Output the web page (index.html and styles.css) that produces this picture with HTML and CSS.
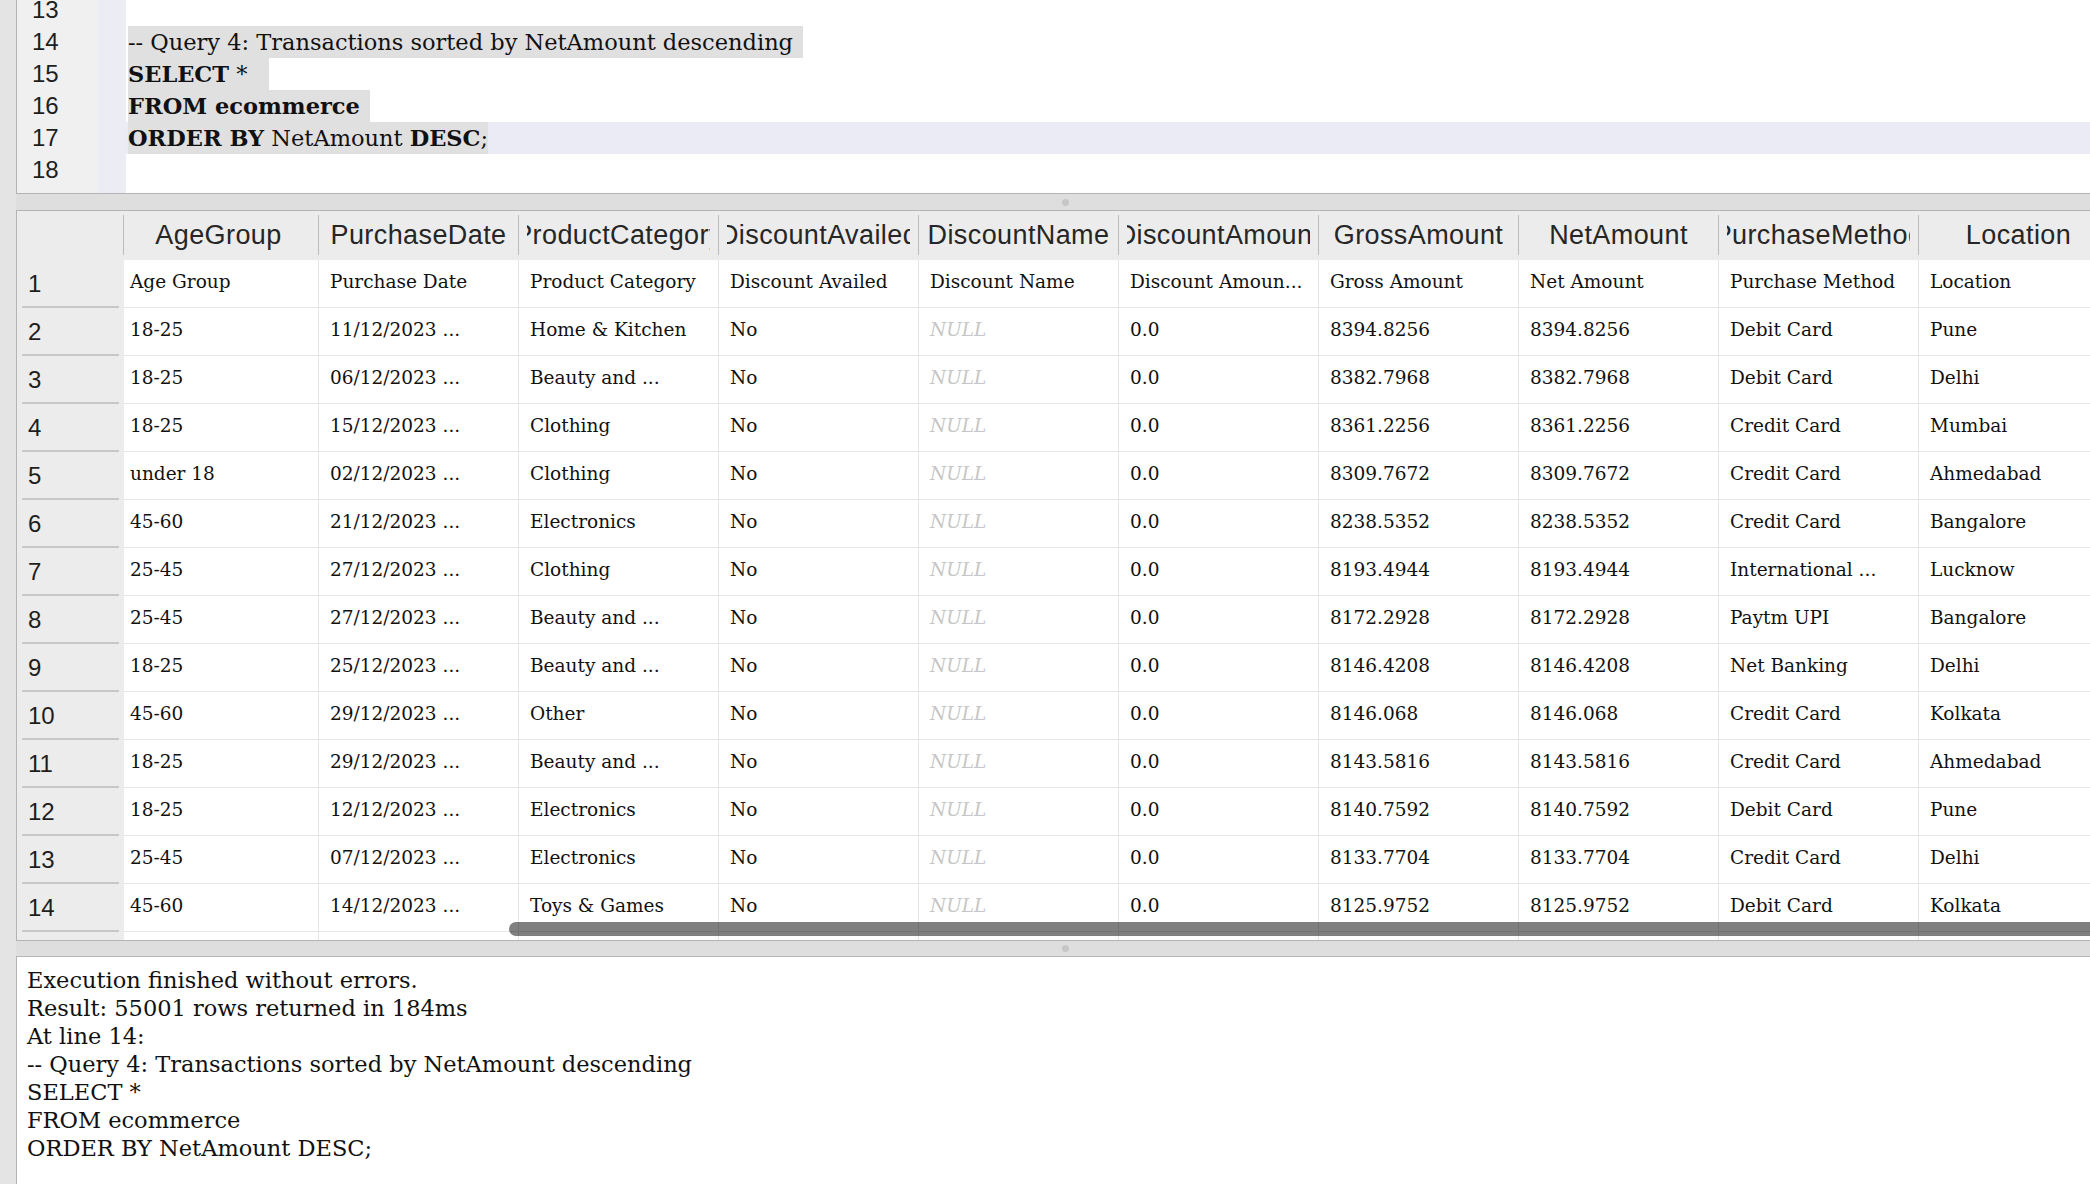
FILE: index.html
```html
<!DOCTYPE html>
<html lang="en">
<head>
<meta charset="utf-8">
<title>SQL Query Results</title>
<link rel="stylesheet" href="styles.css">
</head>
<body>
<div class="app">
  <div class="editor">
    <div class="editor-inner">
      <div class="gutter">
        <div class="ln">13</div>
        <div class="ln">14</div>
        <div class="ln">15</div>
        <div class="ln">16</div>
        <div class="ln">17</div>
        <div class="ln">18</div>
      </div>
      <div class="fold"></div>
      <div class="code">
        <div class="line"></div>
        <div class="line"><span class="sel nl">-- Query 4: Transactions sorted by NetAmount descending</span></div>
        <div class="line"><span class="sel sel-15"><b>SELECT</b> *</span></div>
        <div class="line"><span class="sel nl"><b>FROM ecommerce</b></span></div>
        <div class="line current"><span class="sel"><b>ORDER BY</b> NetAmount <b>DESC</b>;</span></div>
        <div class="line"></div>
      </div>
    </div>
  </div>

  <div class="splitter splitter-top"><span class="handle"></span></div>

  <div class="results">
    <div class="rownums">
      <div class="corner"><div class="corner-inner"></div></div>
      <div class="rn"><div class="rn-inner">1</div></div>
      <div class="rn"><div class="rn-inner">2</div></div>
      <div class="rn"><div class="rn-inner">3</div></div>
      <div class="rn"><div class="rn-inner">4</div></div>
      <div class="rn"><div class="rn-inner">5</div></div>
      <div class="rn"><div class="rn-inner">6</div></div>
      <div class="rn"><div class="rn-inner">7</div></div>
      <div class="rn"><div class="rn-inner">8</div></div>
      <div class="rn"><div class="rn-inner">9</div></div>
      <div class="rn"><div class="rn-inner">10</div></div>
      <div class="rn"><div class="rn-inner">11</div></div>
      <div class="rn"><div class="rn-inner">12</div></div>
      <div class="rn"><div class="rn-inner">13</div></div>
      <div class="rn"><div class="rn-inner">14</div></div>
      <div class="rn"><div class="rn-inner"></div></div>
    </div>
    <div class="viewport">
      <div class="grid">
        <div class="hrow">
          <div class="hc"><div class="hc-inner"><div class="hc-clip"><span>AgeGroup</span></div></div></div>
          <div class="hc"><div class="hc-inner"><div class="hc-clip"><span>PurchaseDate</span></div></div></div>
          <div class="hc"><div class="hc-inner"><div class="hc-clip"><span>ProductCategory</span></div></div></div>
          <div class="hc"><div class="hc-inner"><div class="hc-clip"><span>DiscountAvailed</span></div></div></div>
          <div class="hc"><div class="hc-inner"><div class="hc-clip"><span>DiscountName</span></div></div></div>
          <div class="hc"><div class="hc-inner"><div class="hc-clip"><span>DiscountAmount</span></div></div></div>
          <div class="hc"><div class="hc-inner"><div class="hc-clip"><span>GrossAmount</span></div></div></div>
          <div class="hc"><div class="hc-inner"><div class="hc-clip"><span>NetAmount</span></div></div></div>
          <div class="hc"><div class="hc-inner"><div class="hc-clip"><span>PurchaseMethod</span></div></div></div>
          <div class="hc"><div class="hc-inner"><div class="hc-clip"><span>Location</span></div></div></div>
        </div>
        <div class="row"><div class="c">Age Group</div><div class="c">Purchase Date</div><div class="c">Product Category</div><div class="c">Discount Availed</div><div class="c">Discount Name</div><div class="c">Discount Amoun...</div><div class="c">Gross Amount</div><div class="c">Net Amount</div><div class="c">Purchase Method</div><div class="c">Location</div></div>
        <div class="row"><div class="c">18-25</div><div class="c">11/12/2023 ...</div><div class="c">Home &amp; Kitchen</div><div class="c">No</div><div class="c null">NULL</div><div class="c">0.0</div><div class="c">8394.8256</div><div class="c">8394.8256</div><div class="c">Debit Card</div><div class="c">Pune</div></div>
        <div class="row"><div class="c">18-25</div><div class="c">06/12/2023 ...</div><div class="c">Beauty and ...</div><div class="c">No</div><div class="c null">NULL</div><div class="c">0.0</div><div class="c">8382.7968</div><div class="c">8382.7968</div><div class="c">Debit Card</div><div class="c">Delhi</div></div>
        <div class="row"><div class="c">18-25</div><div class="c">15/12/2023 ...</div><div class="c">Clothing</div><div class="c">No</div><div class="c null">NULL</div><div class="c">0.0</div><div class="c">8361.2256</div><div class="c">8361.2256</div><div class="c">Credit Card</div><div class="c">Mumbai</div></div>
        <div class="row"><div class="c">under 18</div><div class="c">02/12/2023 ...</div><div class="c">Clothing</div><div class="c">No</div><div class="c null">NULL</div><div class="c">0.0</div><div class="c">8309.7672</div><div class="c">8309.7672</div><div class="c">Credit Card</div><div class="c">Ahmedabad</div></div>
        <div class="row"><div class="c">45-60</div><div class="c">21/12/2023 ...</div><div class="c">Electronics</div><div class="c">No</div><div class="c null">NULL</div><div class="c">0.0</div><div class="c">8238.5352</div><div class="c">8238.5352</div><div class="c">Credit Card</div><div class="c">Bangalore</div></div>
        <div class="row"><div class="c">25-45</div><div class="c">27/12/2023 ...</div><div class="c">Clothing</div><div class="c">No</div><div class="c null">NULL</div><div class="c">0.0</div><div class="c">8193.4944</div><div class="c">8193.4944</div><div class="c">International ...</div><div class="c">Lucknow</div></div>
        <div class="row"><div class="c">25-45</div><div class="c">27/12/2023 ...</div><div class="c">Beauty and ...</div><div class="c">No</div><div class="c null">NULL</div><div class="c">0.0</div><div class="c">8172.2928</div><div class="c">8172.2928</div><div class="c">Paytm UPI</div><div class="c">Bangalore</div></div>
        <div class="row"><div class="c">18-25</div><div class="c">25/12/2023 ...</div><div class="c">Beauty and ...</div><div class="c">No</div><div class="c null">NULL</div><div class="c">0.0</div><div class="c">8146.4208</div><div class="c">8146.4208</div><div class="c">Net Banking</div><div class="c">Delhi</div></div>
        <div class="row"><div class="c">45-60</div><div class="c">29/12/2023 ...</div><div class="c">Other</div><div class="c">No</div><div class="c null">NULL</div><div class="c">0.0</div><div class="c">8146.068</div><div class="c">8146.068</div><div class="c">Credit Card</div><div class="c">Kolkata</div></div>
        <div class="row"><div class="c">18-25</div><div class="c">29/12/2023 ...</div><div class="c">Beauty and ...</div><div class="c">No</div><div class="c null">NULL</div><div class="c">0.0</div><div class="c">8143.5816</div><div class="c">8143.5816</div><div class="c">Credit Card</div><div class="c">Ahmedabad</div></div>
        <div class="row"><div class="c">18-25</div><div class="c">12/12/2023 ...</div><div class="c">Electronics</div><div class="c">No</div><div class="c null">NULL</div><div class="c">0.0</div><div class="c">8140.7592</div><div class="c">8140.7592</div><div class="c">Debit Card</div><div class="c">Pune</div></div>
        <div class="row"><div class="c">25-45</div><div class="c">07/12/2023 ...</div><div class="c">Electronics</div><div class="c">No</div><div class="c null">NULL</div><div class="c">0.0</div><div class="c">8133.7704</div><div class="c">8133.7704</div><div class="c">Credit Card</div><div class="c">Delhi</div></div>
        <div class="row"><div class="c">45-60</div><div class="c">14/12/2023 ...</div><div class="c">Toys &amp; Games</div><div class="c">No</div><div class="c null">NULL</div><div class="c">0.0</div><div class="c">8125.9752</div><div class="c">8125.9752</div><div class="c">Debit Card</div><div class="c">Kolkata</div></div>
        <div class="row"><div class="c"></div><div class="c"></div><div class="c"></div><div class="c"></div><div class="c"></div><div class="c"></div><div class="c"></div><div class="c"></div><div class="c"></div><div class="c"></div></div>
      </div>
    </div>
    <div class="hscroll"></div>
  </div>

  <div class="splitter splitter-bottom"><span class="handle"></span></div>

  <div class="log">
    <div>Execution finished without errors.</div>
    <div>Result: 55001 rows returned in 184ms</div>
    <div>At line 14:</div>
    <div>-- Query 4: Transactions sorted by NetAmount descending</div>
    <div>SELECT *</div>
    <div>FROM ecommerce</div>
    <div>ORDER BY NetAmount DESC;</div>
  </div>
</div>
</body>
</html>
```

FILE: styles.css
```css
html, body {
  margin: 0;
  padding: 0;
  overflow: hidden;
  height: 100%;
}

body {
  background: #e4e4e4;
  font-family: "DejaVu Serif", "Liberation Serif", serif;
  color: #111;
}

.app {
  width: 2114px;
  height: 1184px;
  padding-left: 16px;
  box-sizing: border-box;
  display: flex;
  flex-direction: column;
}

/* ---------- Editor ---------- */
.editor {
  height: 194px;
  flex: none;
  box-sizing: border-box;
  border-left: 1px solid #b4b4b4;
  border-bottom: 1px solid #b4b4b4;
  background: #fff;
  overflow: hidden;
}

.editor-inner {
  display: flex;
  margin-top: -6px;
  height: 200px;
}

.gutter {
  width: 81px;
  flex: none;
  background: #f0f0f0;
  padding-left: 15px;
  box-sizing: border-box;
  font-family: "Liberation Sans", Arial, sans-serif;
  font-size: 24px;
  color: #1e1e1e;
}

.ln {
  height: 32px;
  line-height: 32px;
}

.fold {
  width: 28px;
  flex: none;
  background: #ececf5;
}

.code {
  flex: 1;
  font-size: 22.5px;
  color: #111;
}

.line {
  height: 32px;
  line-height: 32px;
  padding-left: 2px;
  white-space: pre;
}

.line.current {
  background: #ebebf5;
}

.sel {
  display: inline-block;
  height: 32px;
  background: #e0e0e0;
}

.sel.nl {
  padding-right: 10px;
}

.sel-15 {
  padding-right: 22px;
}

.sel b {
  font-weight: 700;
}

/* ---------- Splitters ---------- */
.splitter {
  flex: none;
  display: flex;
  justify-content: center;
  align-items: center;
  background: #dedede;
}

.splitter-top {
  height: 16px;
}

.splitter-bottom {
  height: 15px;
}

.handle {
  width: 7px;
  height: 7px;
  border-radius: 50%;
  background: #c6c6c6;
}

/* ---------- Results grid ---------- */
.results {
  position: relative;
  flex: none;
  height: 731px;
  box-sizing: border-box;
  border-top: 1px solid #b4b4b4;
  border-left: 1px solid #b4b4b4;
  border-bottom: 1px solid #b4b4b4;
  background: #fff;
  display: flex;
  overflow: hidden;
}

.rownums {
  width: 107px;
  flex: none;
  background: #ececec;
  font-family: "Liberation Sans", Arial, sans-serif;
  font-size: 24px;
  color: #1e1e1e;
}

.corner {
  height: 49px;
  box-sizing: border-box;
  padding: 4px 0 5px;
}

.corner-inner {
  height: 100%;
  border-right: 1px solid #bcbcbc;
}

.rn {
  height: 48px;
  box-sizing: border-box;
  padding: 0 5px;
}

.rn-inner {
  height: 100%;
  box-sizing: border-box;
  border-bottom: 2px solid #c8c8c8;
  padding-left: 6px;
  padding-top: 2px;
  display: flex;
  align-items: center;
}

.viewport {
  flex: 1;
  overflow: hidden;
}

.grid {
  margin-left: -5px;
  width: 2000px;
}

.hrow {
  display: flex;
  height: 49px;
  background: #ececec;
}

.hc {
  width: 200px;
  flex: none;
  box-sizing: border-box;
  padding: 4px 0 5px;
}

.hc-inner {
  height: 100%;
  box-sizing: border-box;
  border-right: 1px solid #bcbcbc;
  display: flex;
}

.hc-clip {
  flex: 1;
  min-width: 0;
  margin: 0 8px;
  display: flex;
  justify-content: center;
  align-items: center;
  overflow: hidden;
  white-space: nowrap;
  font-family: "Liberation Sans", Arial, sans-serif;
  font-size: 27px;
  letter-spacing: 0.4px;
  color: #262626;
}

.hc-clip span {
  flex: none;
}

.row {
  display: flex;
  height: 48px;
}

.c {
  width: 200px;
  flex: none;
  box-sizing: border-box;
  border-right: 1px solid #e6e6e6;
  border-bottom: 1px solid #e6e6e6;
  padding: 0 0 4px 11px;
  display: flex;
  align-items: center;
  white-space: nowrap;
  overflow: hidden;
  font-size: 18.5px;
  color: #111;
}

.c.null {
  font-style: italic;
  color: #c6c6c6;
}

.hscroll {
  position: absolute;
  left: 492px;
  top: 711px;
  width: 1620px;
  height: 14px;
  border-radius: 7px;
  background: rgba(0, 0, 0, 0.5);
}

/* ---------- Log ---------- */
.log {
  flex: 1;
  box-sizing: border-box;
  border-top: 1px solid #b4b4b4;
  border-left: 1px solid #b4b4b4;
  background: #fff;
  padding: 9px 10px;
  font-size: 22.5px;
  line-height: 28px;
  color: #111;
  white-space: nowrap;
}
```
